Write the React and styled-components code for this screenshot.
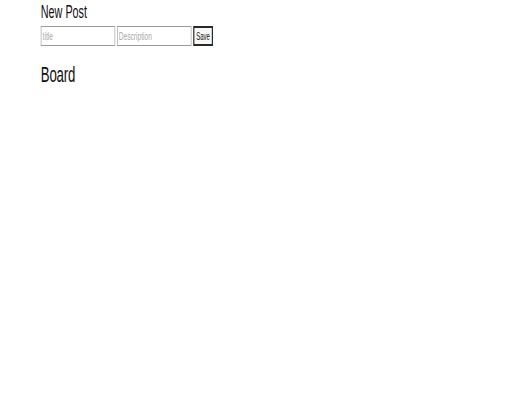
import React from "react";
import styled, { createGlobalStyle } from "styled-components";

const GlobalStyle = createGlobalStyle`
  html, body {
    margin: 0;
    padding: 0;
    background: #ffffff;
  }
  body {
    font-family: "Liberation Sans", Arial, sans-serif;
    color: #111;
  }
`;

/* The reference renders with a tall, narrow typeface; the whole page is
   drawn with a horizontal squeeze to reproduce that look. */
const Page = styled.main`
  transform: scaleX(0.6);
  transform-origin: 0 0;
  width: calc(100% / 0.6);
  padding: 2px 0 0 68px;
  box-sizing: border-box;
`;

const Title = styled.h1`
  margin: 0;
  font-size: ${(p) => p.$size}px;
  line-height: ${(p) => p.$lh}px;
  letter-spacing: ${(p) => p.$track || 0}px;
  font-weight: 400;
  color: #111;
`;

const Form = styled.form`
  display: flex;
  align-items: stretch;
  gap: 3px;
  margin: 4px 0 0;
`;

const Field = styled.input`
  box-sizing: border-box;
  width: 124px;
  height: 20px;
  margin: 0;
  padding: 0 2px;
  border: 1px solid #9a9a9a;
  border-radius: 0;
  font-family: "Liberation Sans", Arial, sans-serif;
  font-size: 11px;
  color: #111;
  background: #fff;
  outline: none;
  &::placeholder {
    color: #a8a8a8;
  }
`;

const SaveButton = styled.button`
  box-sizing: border-box;
  width: 33px;
  height: 20px;
  margin: 0;
  padding: 0;
  border: 2px solid #2a2a2a;
  border-radius: 0;
  background: #f8f8f8;
  font-family: "Liberation Sans", Arial, sans-serif;
  font-size: 10px;
  color: #111;
`;

const Section = styled.section`
  margin-top: ${(p) => p.$top}px;
`;

export default function App() {
  return (
    <>
      <GlobalStyle />
      <Page>
        <Title $size={18} $lh={20}>New Post</Title>
        <Form onSubmit={(e) => e.preventDefault()}>
          <Field placeholder="title" />
          <Field placeholder="Description" />
          <SaveButton type="submit">Save</SaveButton>
        </Form>
        <Section $top={17}>
          <Title $size={22} $lh={24} $track={-0.3}>Board</Title>
        </Section>
      </Page>
    </>
  );
}
